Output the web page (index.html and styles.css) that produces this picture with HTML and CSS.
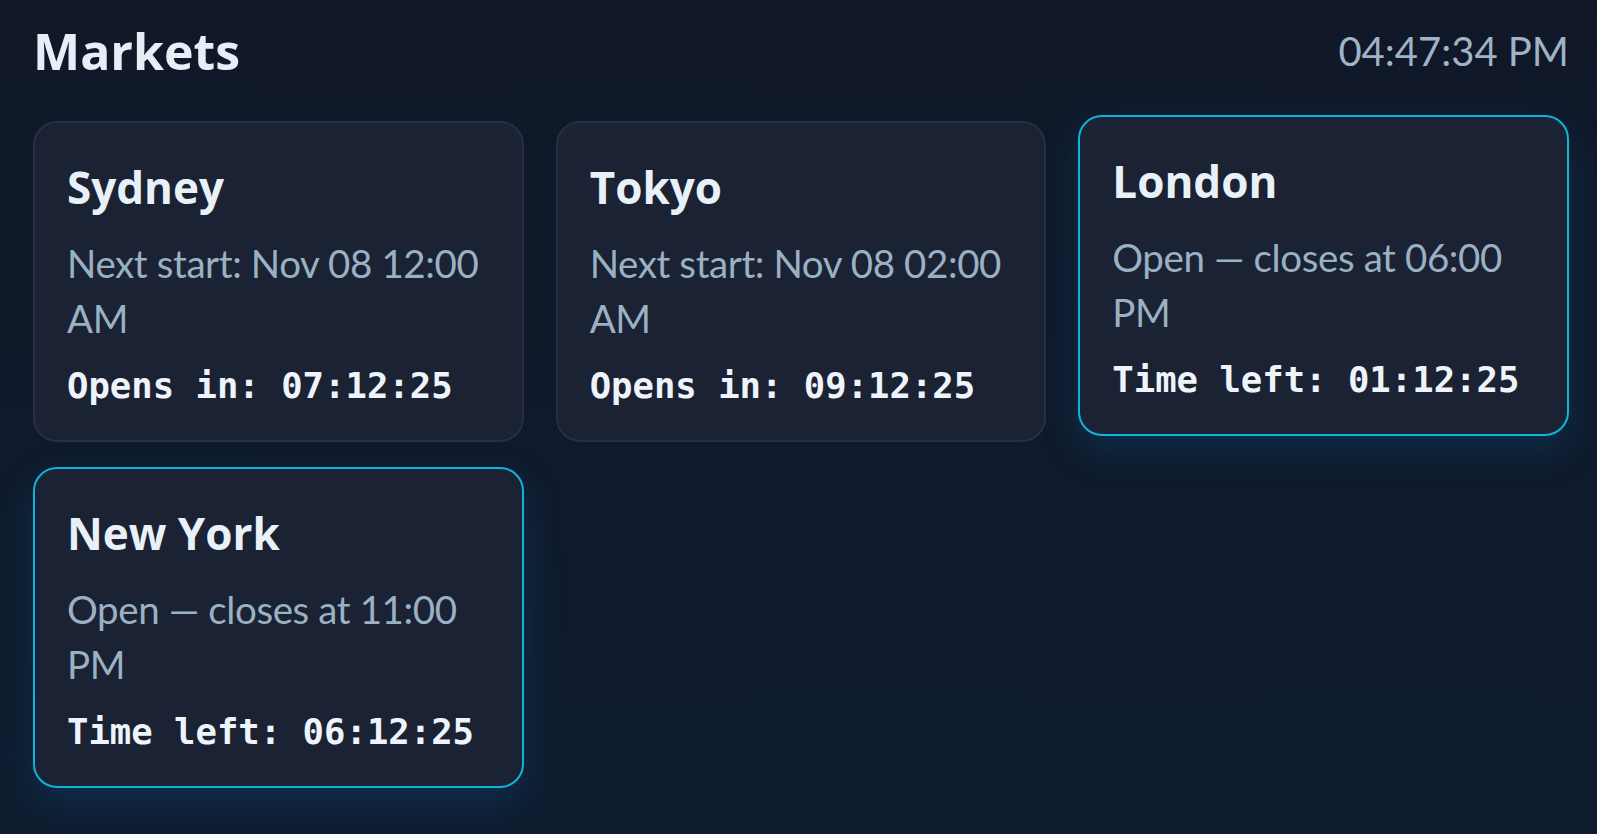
FILE: index.html
```html
<!DOCTYPE html>
<html lang="en">
<head>
    <meta charset="UTF-8">
    <meta name="viewport" content="width=device-width, initial-scale=1.0">
    <title>Markets</title>
    <link rel="stylesheet" href="styles.css">
</head>
<body>

    <div class="page">
        <!-- Header -->
        <div class="top-bar">
            <h1>Markets</h1>
            <span class="clock">04:47:34 PM</span>
        </div>

        <!-- Market cards -->
        <div class="market-grid">
            <div class="market-card">
                <h2>Sydney</h2>
                <p class="status">Next start: Nov 08 12:00 AM</p>
                <div class="countdown">Opens in: 07:12:25</div>
            </div>

            <div class="market-card">
                <h2>Tokyo</h2>
                <p class="status">Next start: Nov 08 02:00 AM</p>
                <div class="countdown">Opens in: 09:12:25</div>
            </div>

            <div class="market-card open">
                <h2>London</h2>
                <p class="status">Open — closes at 06:00 PM</p>
                <div class="countdown">Time left: 01:12:25</div>
            </div>

            <div class="market-card open">
                <h2>New York</h2>
                <p class="status">Open — closes at 11:00 PM</p>
                <div class="countdown">Time left: 06:12:25</div>
            </div>
        </div>
    </div>

</body>
</html>
```

FILE: styles.css
```css
body {
    margin: 0;
    min-height: 100vh;
    background: linear-gradient(180deg, #101828 0%, #0f1c2f 100%);
    font-family: Lato, "Open Sans", sans-serif;
    color: #e8f0f8;
}

.page {
    padding: 20px 28px 32px 33px;
}

/* Header */
.top-bar {
    display: flex;
    justify-content: space-between;
    align-items: center;
    margin-bottom: 39px;
}

h1 {
    margin: 0;
    font-family: "Open Sans", sans-serif;
    font-size: 50px;
    font-weight: 700;
    line-height: 62px;
    color: #e6eff8;
}

.clock {
    font-size: 40px;
    font-weight: 400;
    line-height: 1.2;
    color: #9fb3c6;
}

/* Cards */
.market-grid {
    display: grid;
    grid-template-columns: repeat(3, 1fr);
    gap: 31px 32px;
}

.market-card {
    padding: 38px 32px 32px;
    background-color: #1a2233;
    border: 2px solid #253042;
    border-radius: 24px;
}

.market-card.open {
    border-color: #0eb5d8;
    transform: translateY(-6px);
    box-shadow: 0 14px 38px rgba(12, 110, 170, 0.24);
}

.market-card h2 {
    margin: 0 0 22px;
    font-family: "Open Sans", sans-serif;
    font-size: 44px;
    font-weight: 700;
    line-height: 1.2;
    color: #e8f0f8;
}

.status {
    margin: 0 0 18px;
    font-size: 38.5px;
    font-weight: 400;
    letter-spacing: -0.4px;
    line-height: 55px;
    color: #9ab1c4;
}

.countdown {
    font-family: "DejaVu Sans Mono", monospace;
    font-size: 35.6px;
    font-weight: 700;
    line-height: 44px;
    color: #eef4fa;
}
```
